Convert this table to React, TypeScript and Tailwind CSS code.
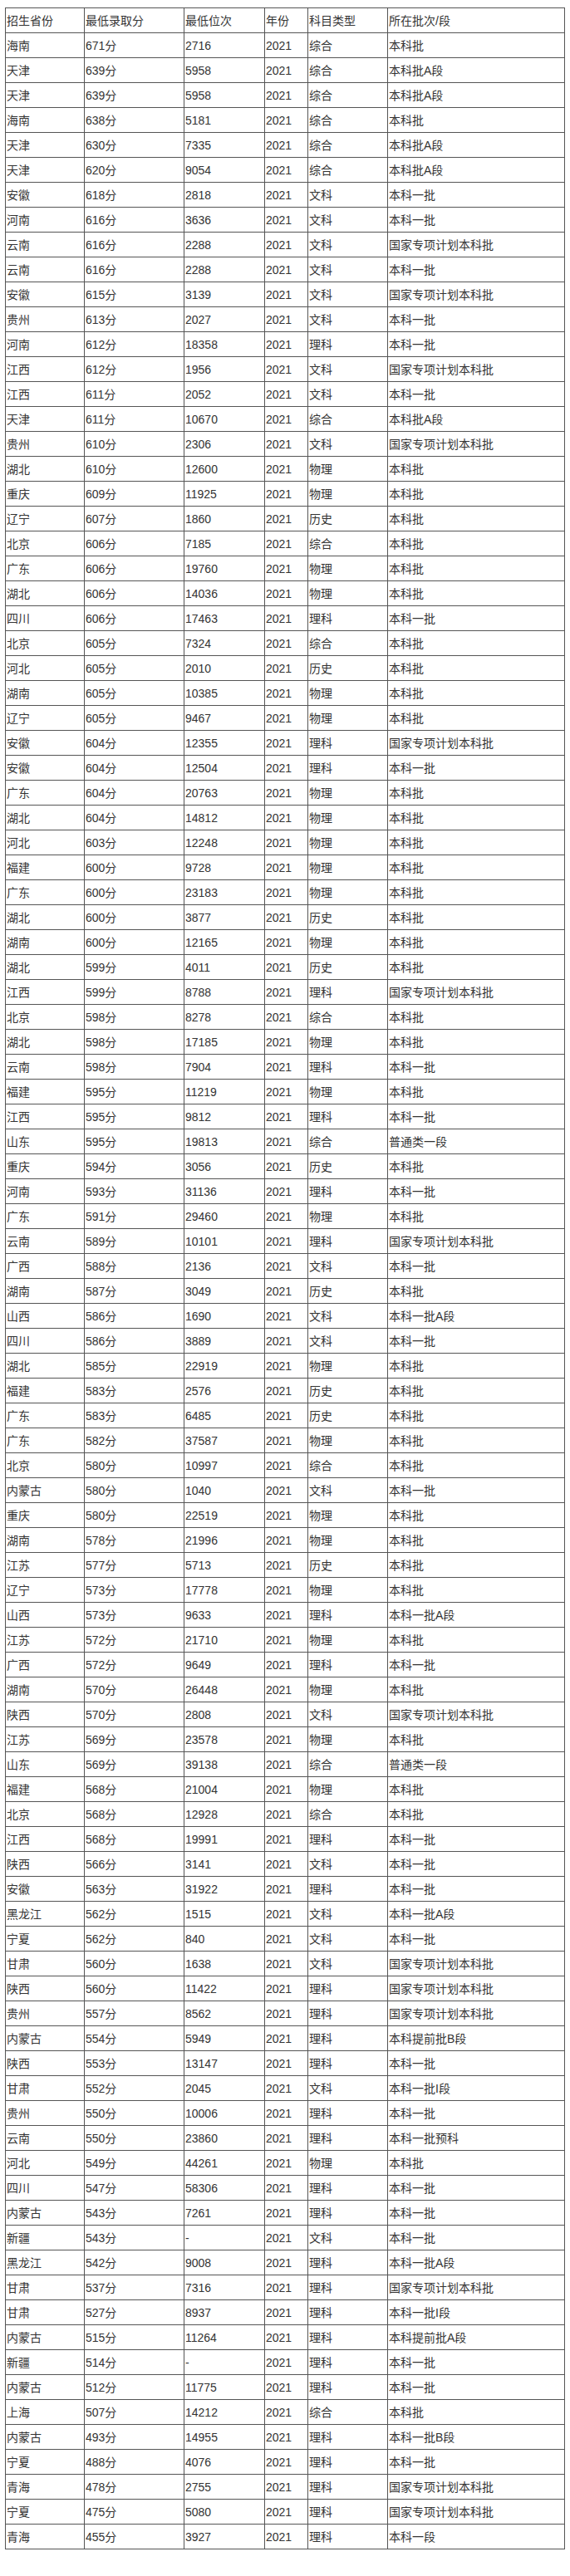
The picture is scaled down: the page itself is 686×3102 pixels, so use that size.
import React from "react";

const raw = `海南|671|2716|综合|本科批
天津|639|5958|综合|本科批A段
天津|639|5958|综合|本科批A段
海南|638|5181|综合|本科批
天津|630|7335|综合|本科批A段
天津|620|9054|综合|本科批A段
安徽|618|2818|文科|本科一批
河南|616|3636|文科|本科一批
云南|616|2288|文科|国家专项计划本科批
云南|616|2288|文科|本科一批
安徽|615|3139|文科|国家专项计划本科批
贵州|613|2027|文科|本科一批
河南|612|18358|理科|本科一批
江西|612|1956|文科|国家专项计划本科批
江西|611|2052|文科|本科一批
天津|611|10670|综合|本科批A段
贵州|610|2306|文科|国家专项计划本科批
湖北|610|12600|物理|本科批
重庆|609|11925|物理|本科批
辽宁|607|1860|历史|本科批
北京|606|7185|综合|本科批
广东|606|19760|物理|本科批
湖北|606|14036|物理|本科批
四川|606|17463|理科|本科一批
北京|605|7324|综合|本科批
河北|605|2010|历史|本科批
湖南|605|10385|物理|本科批
辽宁|605|9467|物理|本科批
安徽|604|12355|理科|国家专项计划本科批
安徽|604|12504|理科|本科一批
广东|604|20763|物理|本科批
湖北|604|14812|物理|本科批
河北|603|12248|物理|本科批
福建|600|9728|物理|本科批
广东|600|23183|物理|本科批
湖北|600|3877|历史|本科批
湖南|600|12165|物理|本科批
湖北|599|4011|历史|本科批
江西|599|8788|理科|国家专项计划本科批
北京|598|8278|综合|本科批
湖北|598|17185|物理|本科批
云南|598|7904|理科|本科一批
福建|595|11219|物理|本科批
江西|595|9812|理科|本科一批
山东|595|19813|综合|普通类一段
重庆|594|3056|历史|本科批
河南|593|31136|理科|本科一批
广东|591|29460|物理|本科批
云南|589|10101|理科|国家专项计划本科批
广西|588|2136|文科|本科一批
湖南|587|3049|历史|本科批
山西|586|1690|文科|本科一批A段
四川|586|3889|文科|本科一批
湖北|585|22919|物理|本科批
福建|583|2576|历史|本科批
广东|583|6485|历史|本科批
广东|582|37587|物理|本科批
北京|580|10997|综合|本科批
内蒙古|580|1040|文科|本科一批
重庆|580|22519|物理|本科批
湖南|578|21996|物理|本科批
江苏|577|5713|历史|本科批
辽宁|573|17778|物理|本科批
山西|573|9633|理科|本科一批A段
江苏|572|21710|物理|本科批
广西|572|9649|理科|本科一批
湖南|570|26448|物理|本科批
陕西|570|2808|文科|国家专项计划本科批
江苏|569|23578|物理|本科批
山东|569|39138|综合|普通类一段
福建|568|21004|物理|本科批
北京|568|12928|综合|本科批
江西|568|19991|理科|本科一批
陕西|566|3141|文科|本科一批
安徽|563|31922|理科|本科一批
黑龙江|562|1515|文科|本科一批A段
宁夏|562|840|文科|本科一批
甘肃|560|1638|文科|国家专项计划本科批
陕西|560|11422|理科|国家专项计划本科批
贵州|557|8562|理科|国家专项计划本科批
内蒙古|554|5949|理科|本科提前批B段
陕西|553|13147|理科|本科一批
甘肃|552|2045|文科|本科一批I段
贵州|550|10006|理科|本科一批
云南|550|23860|理科|本科一批预科
河北|549|44261|物理|本科批
四川|547|58306|理科|本科一批
内蒙古|543|7261|理科|本科一批
新疆|543|-|文科|本科一批
黑龙江|542|9008|理科|本科一批A段
甘肃|537|7316|理科|国家专项计划本科批
甘肃|527|8937|理科|本科一批I段
内蒙古|515|11264|理科|本科提前批A段
新疆|514|-|理科|本科一批
内蒙古|512|11775|理科|本科一批
上海|507|14212|综合|本科批
内蒙古|493|14955|理科|本科一批B段
宁夏|488|4076|理科|本科一批
青海|478|2755|理科|国家专项计划本科批
宁夏|475|5080|理科|国家专项计划本科批
青海|455|3927|理科|本科一段`;

const rows = raw.split("\n").map((l) => l.split("|"));

const cell = "border border-[#555] h-[30px] p-0 pl-px align-middle whitespace-nowrap";

export default function App() {
  return (
    <div
      className="bg-white w-[686px] min-h-[3102px] pt-[9px] pl-[6px] text-[14px] leading-[18px] text-[#333]"
      style={{ fontFamily: '"Liberation Sans", "Noto Sans CJK SC", sans-serif' }}
    >
      <table className="border-collapse border border-[#555] w-[673px] table-fixed">
        <colgroup>
          <col className="w-[95px]" />
          <col className="w-[120px]" />
          <col className="w-[97px]" />
          <col className="w-[52px]" />
          <col className="w-[96px]" />
          <col className="w-[213px]" />
        </colgroup>
        <tbody>
          <tr>
            <td className={cell}>招生省份</td>
            <td className={cell}>最低录取分</td>
            <td className={cell}>最低位次</td>
            <td className={cell}>年份</td>
            <td className={cell}>科目类型</td>
            <td className={cell}>所在批次/段</td>
          </tr>
          {rows.map((r, i) => (
            <tr key={i}>
              <td className={cell}>{r[0]}</td>
              <td className={cell}>{r[1]}分</td>
              <td className={cell}>{r[2]}</td>
              <td className={cell}>2021</td>
              <td className={cell}>{r[3]}</td>
              <td className={cell}>{r[4]}</td>
            </tr>
          ))}
        </tbody>
      </table>
    </div>
  );
}
